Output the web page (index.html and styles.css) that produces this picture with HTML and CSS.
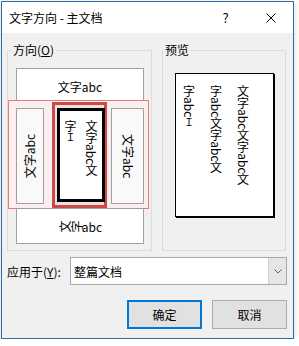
FILE: index.html
```html
<!DOCTYPE html>
<html lang="zh-CN">
<head>
  <meta charset="utf-8">
  <title>文字方向 - 主文档</title>
<link rel="stylesheet" href="styles.css">
</head>
<body>
<div class="dialog">
  <div class="titlebar">
    <span class="title">文字方向 - 主文档</span>
    <span class="tbBtn help">?</span>
    <span class="tbBtn">
      <svg width="10" height="10" viewBox="0 0 10 10"><path d="M0.5 0.5L9.5 9.5M9.5 0.5L0.5 9.5" stroke="#000" stroke-width="1" fill="none"/></svg>
    </span>
  </div>

  <div class="content">
    <div class="groups">
      <fieldset class="group dirGroup">
        <legend>方向(<u>O</u>)</legend>
        <div class="opt optWide">文字abc</div>
        <div class="selFrame">
          <div class="opt optSide optLeft"><span class="rotUp">文字abc</span></div>
          <div class="optSel">
            <div class="optSelInner">
              <span>文字abc文</span>
              <span>字<span class="caret">Ｉ</span></span>
            </div>
          </div>
          <div class="opt optSide optRight"><span class="rotDown">文字abc</span></div>
        </div>
        <div class="opt optWide optBottom"><span class="turn">文</span><span class="turn">字</span>abc</div>
      </fieldset>

      <fieldset class="group previewGroup">
        <legend>预览</legend>
        <div class="page">
          <div class="pageText">
            <span>文字abc文字abc文</span>
            <span>字abc文字abc文</span>
            <span>字abc<span class="caret">Ｉ</span></span>
          </div>
        </div>
      </fieldset>
    </div>

    <div class="applyRow">
      <label class="applyLabel">应用于(<u>Y</u>):</label>
      <div class="combo">
        <span class="comboText">整篇文档</span>
        <span class="comboBtn">
          <svg width="8" height="5" viewBox="0 0 8 5"><path d="M0.5 0.5L4 4L7.5 0.5" stroke="#606060" fill="none"/></svg>
        </span>
      </div>
    </div>

    <div class="buttons">
      <button class="btn btnDefault">确定</button>
      <button class="btn">取消</button>
    </div>
  </div>
</div>
</body>
</html>
```

FILE: styles.css
```css
* {
  box-sizing: border-box;
}

body {
  margin: 0;
  background: #fff;
  font-family: "Noto Sans CJK SC", sans-serif;
  font-size: 12px;
  color: #000;
}

.dialog {
  width: 293px;
  height: 338px;
  margin: 1px 0 0 1px;
  border: 1px solid #2b6ea8;
  background: #f0f0f0;
  display: flex;
  flex-direction: column;
  box-shadow: 0 2px 6px rgba(0, 0, 0, 0.18);
}

.titlebar {
  height: 31px;
  background: #fff;
  display: flex;
  align-items: center;
  padding-left: 7px;
}

.title {
  flex: 1;
  line-height: 16px;
}

.tbBtn {
  width: 45px;
  height: 31px;
  display: flex;
  align-items: center;
  justify-content: center;
}

.help {
  font-size: 13px;
}

.content {
  flex: 1;
  padding: 10px 6px 0 5px;
}

.groups {
  display: flex;
  gap: 10px;
}

.group {
  margin: 0;
  padding: 0;
  min-width: 0;
  border: 1px solid #dcdcdc;
}

.group legend {
  padding: 0 2px;
  line-height: 14px;
}

.dirGroup {
  width: 145px;
  padding: 11px 0 6px 0;
}

.dirGroup legend {
  margin-left: 3px;
}

.previewGroup {
  width: 124px;
}

.opt {
  background: #fff;
  border: 1px solid #a0a0a0;
}

.optWide {
  margin-left: 8px;
  width: 128px;
  height: 36px;
  display: flex;
  align-items: center;
  justify-content: center;
}

.optBottom {
  margin-top: -1px;
}

.turn {
  display: inline-block;
  transform: rotate(-90deg);
}

.selFrame {
  margin-top: -4px;
  width: 141px;
  height: 109px;
  border: 1px solid #e47b7b;
  background: #fbeeee;
  display: flex;
  align-items: flex-start;
  padding: 1px 0 0 7px;
}

.optSide {
  margin-top: 6px;
  width: 28px;
  height: 96px;
  background: #f9f9f9;
  display: flex;
  align-items: center;
  justify-content: center;
}

.optRight {
  width: 33px;
  margin-left: 4px;
}

.rotUp, .rotDown {
  writing-mode: vertical-rl;
  text-orientation: sideways;
  line-height: 16px;
}

.rotUp {
  transform: rotate(180deg);
}

.optSel {
  margin-left: 8px;
  width: 55px;
  height: 106px;
  border: 3px solid #d04747;
  padding: 3px 2px;
  background: #e4e4e4;
}

.optSelInner {
  height: 100%;
  border: 3px solid #000;
  background: #fff;
  writing-mode: vertical-rl;
  padding-top: 9px;
  line-height: 21px;
}

.optSelInner > span,
.pageText > span {
  display: block;
}

.caret {
  font-size: 10px;
}

.page {
  width: 99px;
  height: 144px;
  margin: 16px auto 0 auto;
  border: 1px solid #000;
  box-shadow: 1px 1px 0 #000;
  background: #fff;
}

.pageText {
  height: 100%;
  writing-mode: vertical-rl;
  padding: 11px 6px 0 0;
  line-height: 27px;
}

.applyRow {
  margin-top: 6px;
  height: 28px;
  display: flex;
  align-items: center;
}

.applyLabel {
  width: 63px;
}

.combo {
  flex: 1;
  height: 28px;
  border: 1px solid #a9a9a9;
  background: #fff;
  display: flex;
  align-items: center;
}

.comboText {
  flex: 1;
  padding-left: 3px;
}

.comboBtn {
  width: 18px;
  height: 100%;
  background: #e6e6e6;
  border-left: 1px solid #cfcfcf;
  display: flex;
  align-items: center;
  justify-content: center;
}

.buttons {
  margin-top: 15px;
  display: flex;
  justify-content: flex-end;
  gap: 10px;
}

.btn {
  width: 75px;
  height: 29px;
  border: 1px solid #adadad;
  background: #e1e1e1;
  font-family: "Noto Sans CJK SC", sans-serif;
  font-size: 12px;
  color: #000;
  padding: 0;
}

.btnDefault {
  border: 2px solid #0078d7;
}
```
